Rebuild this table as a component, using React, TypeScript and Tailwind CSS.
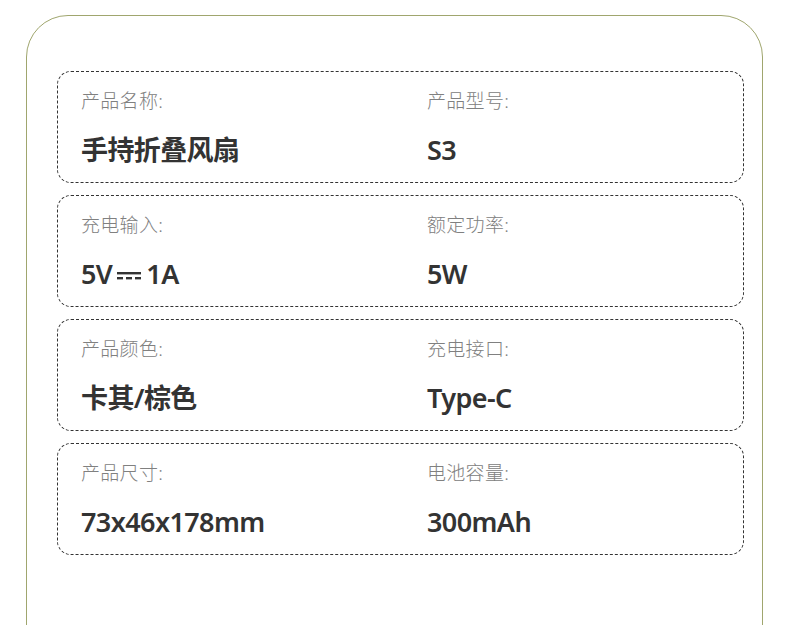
import React from "react";

const font = { fontFamily: '"Noto Sans", "Open Sans", "Noto Sans CJK SC", sans-serif' };

function DC() {
  return (
    <svg width="24" height="8" viewBox="0 0 24 8" className="mx-[5px] inline-block relative top-[2px]">
      <rect x="0" y="0" width="24" height="2.4" fill="#333" />
      <rect x="0" y="5" width="6" height="2.4" fill="#333" />
      <rect x="9" y="5" width="6" height="2.4" fill="#333" />
      <rect x="18" y="5" width="6" height="2.4" fill="#333" />
    </svg>
  );
}

type Cell = { label: string; value: React.ReactNode };

const rows: [Cell, Cell][] = [
  [
    { label: "产品名称:", value: "手持折叠风扇" },
    { label: "产品型号:", value: "S3" },
  ],
  [
    {
      label: "充电输入:",
      value: (
        <span className="inline-flex items-center">
          5V<DC />1A
        </span>
      ),
    },
    { label: "额定功率:", value: "5W" },
  ],
  [
    { label: "产品颜色:", value: "卡其/棕色" },
    { label: "充电接口:", value: "Type-C" },
  ],
  [
    { label: "产品尺寸:", value: "73x46x178mm" },
    { label: "电池容量:", value: "300mAh" },
  ],
];

function CellView({ c }: { c: Cell }) {
  return (
    <div className="flex flex-col">
      <div className="text-[19px] leading-[24px] text-[#808080] font-light tracking-[0.3px]">{c.label}</div>
      <div className="mt-[19px] text-[27px] leading-[36px] text-[#333333] font-semibold tracking-[-0.6px]">{c.value}</div>
    </div>
  );
}

export default function App() {
  return (
    <div className="w-[790px] h-[625px] bg-white overflow-hidden" style={font}>
      <div className="ml-[26px] mr-[27px] mt-[15px] h-[700px] border border-[#a0a66e] rounded-[42px] pl-[30px] pr-[18px] pt-[55px]">
        <div className="flex flex-col gap-[12px]">
          {rows.map((r, i) => (
            <div
              key={i}
              className="h-[112px] border border-dashed border-[#333333] rounded-[14px] pl-[23px] pt-[17px] grid grid-cols-[346px_1fr]"
            >
              <CellView c={r[0]} />
              <CellView c={r[1]} />
            </div>
          ))}
        </div>
      </div>
    </div>
  );
}
